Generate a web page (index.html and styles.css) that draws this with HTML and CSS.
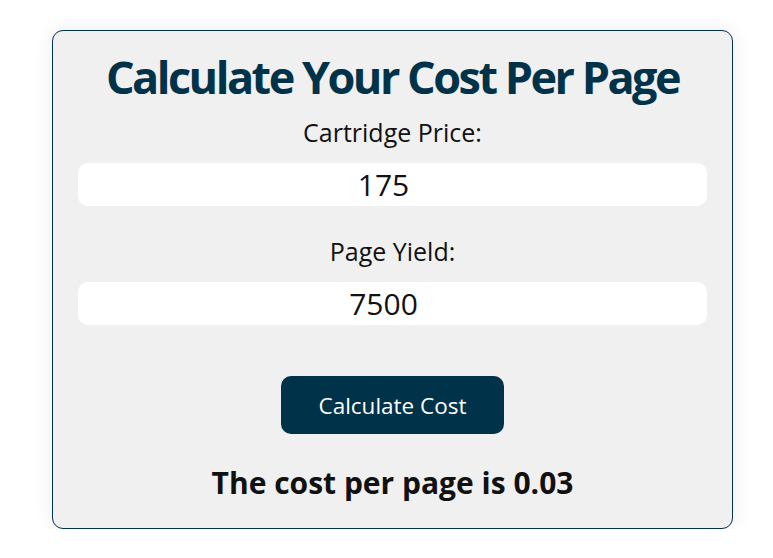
FILE: index.html
```html
<!DOCTYPE html>
<html>
<head>
<meta charset="utf-8">
<link rel="stylesheet" href="styles.css">
</head>
<body>
<div class="card">
  <h1 class="title">Calculate Your Cost Per Page</h1>
  <label class="label">Cartridge Price:</label>
  <div class="input">175</div>
  <label class="label label-2">Page Yield:</label>
  <div class="input">7500</div>
  <button class="btn">Calculate Cost</button>
  <p class="result">The cost per page is 0.03</p>
</div>
</body>
</html>
```
FILE: styles.css
```css
html, body { margin: 0; padding: 0; background: #fff; }
body { font-family: "Open Sans", sans-serif; padding: 30px 0 0 52px; }
.card {
  box-sizing: border-box;
  width: 681px;
  height: 499px;
  border: 1px solid #003349;
  border-radius: 11px;
  background: #f0f0f0;
  box-shadow: 0 0 20px rgba(0,0,0,0.08);
  padding: 0 25px;
  display: flex;
  flex-direction: column;
  align-items: stretch;
  text-align: center;
}
.title {
  margin: 19px 0 0;
  font-size: 45px;
  font-weight: 700;
  letter-spacing: -2.5px;
  color: #003349;
  line-height: 54px;
  white-space: nowrap;
}
.label { display: block; font-size: 25px; color: #111; line-height: 34px; margin-top: 11px; }
.label-2 { margin-top: 28px; }
.input {
  box-sizing: border-box;
  background: #fff;
  border-radius: 10px;
  height: 43px;
  line-height: 43px;
  font-size: 30px;
  color: #111;
  margin-top: 14px;
  padding-right: 18px;
}
.btn {
  align-self: center;
  margin-top: 51px;
  width: 223px;
  height: 58px;
  background: #003349;
  color: #fff;
  border: none;
  border-radius: 10px;
  font-family: "Open Sans", sans-serif;
  font-size: 22.5px;
  padding: 0;
}
.result { margin: 29px 0 0; font-size: 30px; font-weight: 700; color: #111; line-height: 40px; }
```
